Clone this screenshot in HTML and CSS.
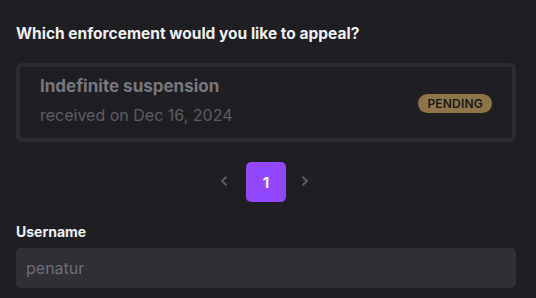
FILE: index.html
```html
<!DOCTYPE html>
<html lang="en">
<head>
    <meta charset="UTF-8">
    <title>Appeal</title>
    <link rel="stylesheet" href="styles.css">
</head>
<body>
    <div class="appeal">
        <h2 class="question">Which enforcement would you like to appeal?</h2>

        <div class="enforcement">
            <div class="enforcement-info">
                <div class="enforcement-title">Indefinite suspension</div>
                <div class="enforcement-date">received on Dec 16, 2024</div>
            </div>
            <span class="badge">PENDING</span>
        </div>

        <div class="pager">
            <button class="pager-arrow" aria-label="Previous">
                <svg width="20" height="10" viewBox="0 0 20 10"><path d="M6.5 0.8L2 5L6.5 9.2" fill="none" stroke="currentColor" stroke-width="2"/></svg>
            </button>
            <button class="pager-page">1</button>
            <button class="pager-arrow" aria-label="Next">
                <svg width="20" height="10" viewBox="0 0 20 10"><path d="M10.5 0.8L15 5L10.5 9.2" fill="none" stroke="currentColor" stroke-width="2"/></svg>
            </button>
        </div>

        <label class="field-label" for="username">Username</label>
        <input class="field-input" id="username" type="text" value="penatur" readonly>
    </div>
</body>
</html>
```

FILE: styles.css
```css
:root {
    --bg-color: #1f1f23;
    --card-border: #2b2b30;
    --input-bg: #2f2f35;
    --purple: #9147ff;
    --gold: #8c7548;
}

body {
    margin: 0;
    background-color: var(--bg-color);
    font-family: 'Inter', 'Noto Sans', sans-serif;
    color: #efeff1;
}

.appeal {
    padding: 24px 20px 0 16px;
    display: flex;
    flex-direction: column;
}

.question {
    font-size: 15.5px;
    font-weight: 700;
    margin: 0 0 19px 0;
    line-height: 20px;
}

.enforcement {
    display: flex;
    align-items: center;
    justify-content: space-between;
    border: 4px solid var(--card-border);
    border-radius: 6px;
    padding: 8px 20px 13px 20px;
}

.enforcement-title {
    font-size: 17px;
    font-weight: 700;
    color: #77777d;
    line-height: 22px;
}

.enforcement-date {
    font-size: 16px;
    color: #5b5b61;
    margin-top: 8px;
    line-height: 20px;
}

.badge {
    background: var(--gold);
    color: #18181b;
    font-size: 12px;
    font-weight: 600;
    padding: 3px 9px;
    border-radius: 10px;
    line-height: 13px;
    margin-top: 6px;
    letter-spacing: 0.2px;
}

.pager {
    display: flex;
    justify-content: center;
    align-items: center;
    gap: 6px;
    margin: 20px 0 21px 0;
}

.pager-arrow {
    background: none;
    border: none;
    color: #5c5c63;
    width: 20px;
    height: 20px;
    padding: 0;
    display: flex;
    align-items: center;
    justify-content: center;
    margin-top: -2px;
}

.pager-page {
    width: 40px;
    height: 40px;
    border: none;
    border-radius: 5px;
    background: var(--purple);
    color: #fff;
    font-family: inherit;
    font-size: 15px;
    font-weight: 700;
}

.field-label {
    font-size: 14px;
    font-weight: 700;
    line-height: 18px;
    margin-bottom: 7px;
}

.field-input {
    height: 40px;
    box-sizing: border-box;
    border: none;
    border-radius: 5px;
    background: var(--input-bg);
    color: #6f6f75;
    font-family: inherit;
    font-size: 16px;
    padding: 0 10px;
    outline: none;
}
```
